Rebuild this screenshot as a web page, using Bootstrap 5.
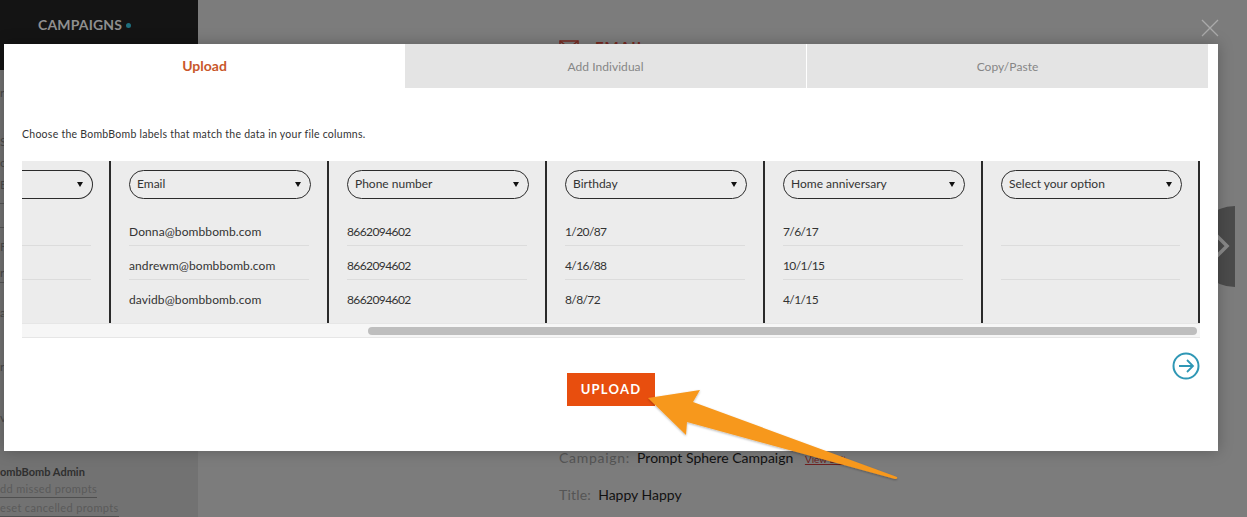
<!doctype html>
<html lang="en"><head><meta charset="utf-8"><title>Upload</title>
<link href="https://cdn.jsdelivr.net/npm/bootstrap@5.3.0/dist/css/bootstrap.min.css" rel="stylesheet">
<style>
html,body{height:517px;overflow:hidden}
body{background:#7b7b7b;font-family:Lato,"Liberation Sans",sans-serif;font-size:12px;color:#222;position:relative}
.bg-stage{height:517px;width:1247px}
.side-col{width:198px;background:#727272;flex:none;position:relative}
.side-head{height:70px;background:#141414;padding:14px 0 0 38px;color:#8f8f8f;font-weight:700;font-size:14px;letter-spacing:.15px;line-height:22px}
.teal-dot{display:inline-block;width:5px;height:5px;border-radius:50%;background:#1f6f7d;margin-left:4px;vertical-align:2px}
.side-admin{position:absolute;left:0;top:463px;line-height:17px;font-size:11px;color:#5a5a5a}
.side-admin b{color:#2f2f2f;display:block}
.side-admin span{display:table;border-bottom:1px solid #4f4f4f;letter-spacing:.35px;margin-bottom:1px}
.side-bit{position:absolute;left:0;font-size:12px;line-height:14px;color:#4a4a4a}
.side-rule{position:absolute;left:0;width:4px;height:1px;background:#555}
.main-col{position:relative;flex:1;background:#7c7c7c}
.page-title{position:absolute;left:35px;top:-36px;font-size:30px;line-height:36px;color:#333;white-space:nowrap}
.mail-mark{position:absolute;left:361px;top:40px;display:flex;gap:16px;align-items:flex-start}
.mail-word{font-size:15px;font-weight:700;line-height:14px;color:#7a2a22;letter-spacing:1px}
.back-line{position:absolute;left:361px;top:448px;font-size:14px;line-height:20px;color:#111;white-space:nowrap}
.back-line i{font-style:normal;color:#555;letter-spacing:.7px}
.back-line u{font-size:10px;color:#6d1f1f;margin-left:8px}
.title-line{top:485px}
.title-line i{letter-spacing:.2px}
.pager{position:absolute;left:997px;top:206px;width:40px;height:81px;background:#4b4b4b;border-radius:40px 0 0 40px}
.pager-mark{position:absolute;left:1018px;top:234px}
.close-x{position:absolute;left:1201px;top:19px}
.dialog-box{position:absolute;left:4px;top:44px;width:1214px;height:407px;background:#fff;box-shadow:0 0 14px rgba(0,0,0,.25)}
.tab-row{height:44px;width:1204px}
.tab-cell{display:flex;align-items:center;justify-content:center;background:#e4e4e4;color:#868686;font-size:12px;letter-spacing:.05px;width:401px;padding-top:2px}
.tab-cell:last-child{margin-left:1px}
.tab-active{background:#fff;color:#c9572a;font-weight:700;font-size:14px;letter-spacing:0;padding:0 0 2px}
.hint{margin:39px 0 0 18px;font-size:10.5px;line-height:14px;letter-spacing:.26px;color:#333;height:14px}
.map-wrap{margin:20px 0 0 18px;width:1178px;height:177px;position:relative;overflow:hidden}
.map-cols{height:162px;background:#ececec}
.map-col{flex:none;width:218px;padding:9px 16px 0 18px;border-right:2px solid #2a2a2a;height:162px}
.map-col:first-child{width:89px;padding-left:0}
.map-col:last-child{width:217px}
.pill{height:29px;border:1px solid #2b2b2b;border-radius:15px;display:flex;align-items:center;justify-content:space-between;padding:0 9px 2px 7px;font-size:12px;color:#333;margin-bottom:13px}
.pill-cut{border-left:0;border-radius:0 15px 15px 0}
.pill::after{content:"";border:3.5px solid transparent;border-top:5px solid #111;border-bottom:0;margin-top:2px}
.data-cell{height:34px;line-height:39px;font-size:12px;letter-spacing:.1px;color:#333;border-bottom:1px solid #dcdcdc;white-space:nowrap;margin-right:2px}
.data-cell:last-child{border-bottom:0}
.num-cell{letter-spacing:-.6px}
.scroll-track{height:15px;background:#f6f6f6;border-top:1px solid #e6e6e6;border-bottom:1px solid #e6e6e6;position:relative}
.scroll-thumb{position:absolute;left:346px;top:3px;width:829px;height:8px;border-radius:4px;background:#bebebe}
.next-icon{position:absolute;left:1168px;top:308px}
.upload-btn{position:absolute;left:563px;top:329px;width:88px;height:33px;border-radius:0;border:0;background:#e84e0e;color:#fff;font-weight:700;font-size:13px;letter-spacing:1.2px;padding:0}
.arrow-over{position:absolute;left:0;top:0;pointer-events:none}
</style></head>
<body>
<div class="bg-stage d-flex">
 <div class="side-col">
  <div class="side-head">CAMPAIGNS<span class="teal-dot"></span></div>
  <span class="side-bit" style="top:86px">r</span><span class="side-bit" style="top:135px">S</span><span class="side-bit" style="top:156px">o</span><span class="side-bit" style="top:178px">E</span><span class="side-bit" style="top:240px">F</span><span class="side-bit" style="top:266px">r</span><span class="side-bit" style="top:306px">a</span><span class="side-bit" style="top:360px">r</span><span class="side-bit" style="top:411px">v</span>
  <i class="side-rule" style="top:203px"></i><i class="side-rule" style="top:227px"></i><i class="side-rule" style="top:282px"></i>
  <div class="side-admin"><b>ombBomb Admin</b><span>dd missed prompts</span><span>eset cancelled prompts</span></div>
 </div>
 <div class="main-col">
  <div class="page-title">Campaigns</div>
  <div class="mail-mark"><svg width="20" height="14" viewBox="0 0 20 14" fill="none" stroke="#7a2a22" stroke-width="1.5"><rect x="1" y="1" width="18" height="12"/><path d="M1 1 10 8 19 1"/></svg><span class="mail-word">EMAIL</span></div>
  <div class="back-line"><i>Campaign:</i>&nbsp; Prompt Sphere Campaign <u>View Edit</u></div>
  <div class="back-line title-line"><i>Title:</i>&nbsp; Happy Happy</div>
  <div class="pager"></div>
  <svg class="pager-mark" width="14" height="24" viewBox="0 0 14 24"><path d="M0 1 11 12 0 23" fill="none" stroke="#8a8a8a" stroke-width="3.5"/></svg>
 </div>
</div>
<svg class="close-x" width="18" height="18" viewBox="0 0 18 18"><path d="M1 1 17 17M17 1 1 17" stroke="#aaa" stroke-width="1.3" fill="none"/></svg>
<div class="dialog-box">
 <div class="tab-row d-flex">
  <div class="tab-cell tab-active">Upload</div>
  <div class="tab-cell">Add Individual</div>
  <div class="tab-cell">Copy/Paste</div>
 </div>
 <p class="hint">Choose the BombBomb labels that match the data in your file columns.</p>
 <div class="map-wrap">
  <div class="map-cols d-flex">
   <div class="map-col"><div class="pill pill-cut"><span></span></div><div class="data-cell">&nbsp;</div><div class="data-cell">&nbsp;</div><div class="data-cell">&nbsp;</div></div>
   <div class="map-col"><div class="pill">Email</div><div class="data-cell">Donna@bombbomb.com</div><div class="data-cell">andrewm@bombbomb.com</div><div class="data-cell">davidb@bombbomb.com</div></div>
   <div class="map-col"><div class="pill">Phone number</div><div class="data-cell num-cell">8662094602</div><div class="data-cell num-cell">8662094602</div><div class="data-cell num-cell">8662094602</div></div>
   <div class="map-col"><div class="pill">Birthday</div><div class="data-cell num-cell">1/20/87</div><div class="data-cell num-cell">4/16/88</div><div class="data-cell num-cell">8/8/72</div></div>
   <div class="map-col"><div class="pill">Home anniversary</div><div class="data-cell num-cell">7/6/17</div><div class="data-cell num-cell">10/1/15</div><div class="data-cell num-cell">4/1/15</div></div>
   <div class="map-col"><div class="pill">Select your option</div><div class="data-cell">&nbsp;</div><div class="data-cell">&nbsp;</div><div class="data-cell">&nbsp;</div></div>
  </div>
  <div class="scroll-track"><div class="scroll-thumb"></div></div>
 </div>
 <svg class="next-icon" width="28" height="28" viewBox="0 0 28 28" fill="none" stroke="#2f97b5"><circle cx="14" cy="14" r="12.5" stroke-width="2"/><path d="M7 14H21M15 8l6 6-6 6" stroke-width="1.8"/></svg>
 <button type="button" class="btn upload-btn">UPLOAD</button>
</div>
<svg class="arrow-over" width="1247" height="517" viewBox="0 0 1247 517"><defs><filter id="sh" x="-5%" y="-5%" width="110%" height="115%"><feDropShadow dx="0" dy="1" stdDeviation="1" flood-color="#000" flood-opacity=".3"/></filter></defs><path d="M648 398 700 390 693 402 897 477Q898 479 895 479L687 422 686 435Z" fill="#f7981d" filter="url(#sh)"/></svg>
<script src="https://cdn.jsdelivr.net/npm/bootstrap@5.3.0/dist/js/bootstrap.bundle.min.js"></script>
</body></html>
